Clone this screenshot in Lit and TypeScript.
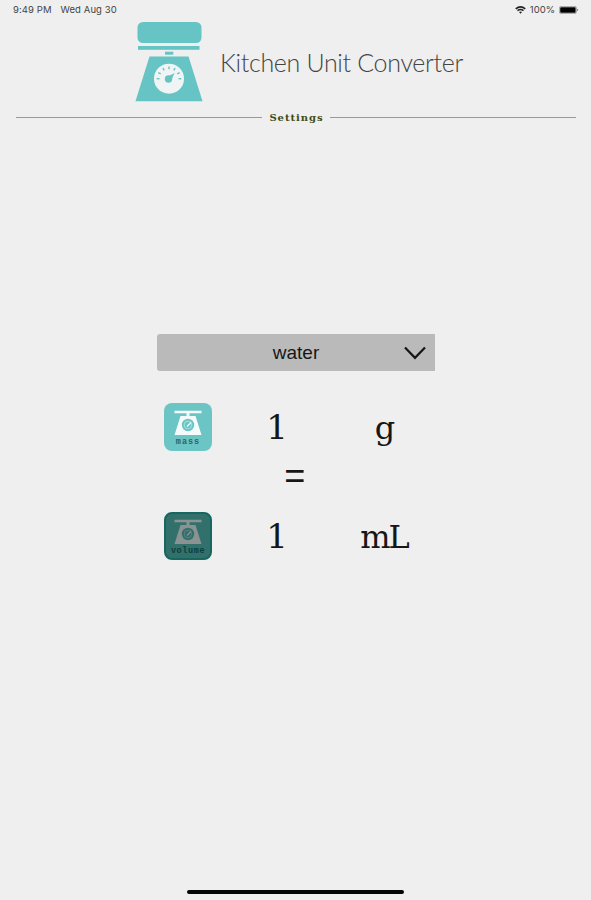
import { LitElement, html, css, svg } from "lit";
import { customElement, property } from "lit/decorators.js";

const TICKS = [-90, -60, -30, 0, 30, 60, 90];

@customElement("unit-tile")
class UnitTile extends LitElement {
  @property() label = "";
  @property({ type: Boolean, reflect: true }) dimmed = false;
  static styles = css`
    :host { display: block; width: 48px; height: 48px; box-sizing: border-box; border-radius: 8px; background: #6bc5c5; color: #2b6665; --plate: #f5fbfb; --dial: #6bc5c5; }
    :host([dimmed]) { background: #32706c; border: 2px solid #176660; color: #0b3f3c; --plate: #8b9292; --dial: #32706c; }
    svg { display: block; width: 36px; height: 28px; margin: 6px auto 0; }
    :host([dimmed]) svg { margin-top: 4px; }
    .label { font: bold 8.5px/9px "Liberation Mono", monospace; text-align: center; margin-top: 1px; letter-spacing: 1px; }
    :host([dimmed]) .label { letter-spacing: 0.6px; }
  `;
  render() {
    return html`
      <svg viewBox="0 0 36 28">
        <path d="M4.5 1.8H31.5V4.2H4.5Z M16.5 4H19.5V8H16.5Z M10.5 7H25.5L31.5 26H4.5Z" fill="var(--plate)" />
        <circle cx="18" cy="16" r="6.2" fill="var(--dial)" />
        <circle cx="18" cy="16" r="3.8" fill="none" stroke="var(--plate)" stroke-width="1" opacity=".45" />
        <path d="M17 17.5L21 13.5" stroke="var(--plate)" stroke-width="1.2" />
      </svg>
      <div class="label">${this.label}</div>
    `;
  }
}

@customElement("app-root")
class AppRoot extends LitElement {
  static styles = css`
    :host { display: flex; flex-direction: column; box-sizing: border-box; width: 100%; height: 900px; background: #efefef; color: #161616; overflow: hidden; }
    .status { display: flex; justify-content: space-between; height: 20px; padding: 0 12px 0 13px; font: 9.5px/20px Inter, sans-serif; color: #444; }
    .left { display: flex; gap: 9px; letter-spacing: 0.08px; }
    .right { display: flex; align-items: center; gap: 4px; }
    .right svg { display: block; }
    .brand { display: flex; height: 84px; padding-left: 135px; align-items: flex-start; }
    .logo { display: block; width: 68px; height: 84px; flex: none; }
    .title { margin-left: 17px; font: 300 25px/84px Lato, sans-serif; letter-spacing: -0.33px; color: #444; white-space: nowrap; }
    .divider { display: flex; align-items: center; gap: 7px; height: 14px; margin: 6px 15px 0 16px; }
    .line { height: 1px; flex: 1; background: #999; }
    .settings { font: bold 10px/16px "DejaVu Serif", serif; letter-spacing: 0.95px; margin: 1px -0.95px 0 0; color: #3d4d14; }
    .select { display: grid; grid-template-columns: 1fr auto 1fr; align-items: center; width: 278px; height: 37px; margin: 210px 0 0 157px; background: #bababa; border-radius: 3px 0 0 3px; }
    .value { grid-column: 2; font: 19px/37px "Liberation Sans", sans-serif; }
    .chevron { display: block; justify-self: end; margin-right: 8px; }
    .row { display: grid; grid-template: 48px / 48px 130px 86px; margin-left: 164px; align-items: center; }
    .mass { margin-top: 32px; }
    .volume { margin-top: 12px; }
    .amount, .unit { font: 32px/46px "DejaVu Serif", serif; text-align: center; }
    .amount { font-size: 34px; }
    .unit { letter-spacing: -2px; margin: 1px 2px 0 0; }
    .equals { height: 49px; margin: 0 0 0 284px; font: 36px/56px "Liberation Mono", monospace; }
    .home { width: 217px; height: 4px; border-radius: 2px; background: #050505; margin: auto 0 6px 187px; }
  `;
  render() {
    return html`
      <div class="status">
        <div class="left"><span>9:49 PM</span><span>Wed Aug 30</span></div>
        <div class="right">
          <svg width="11" height="8" viewBox="0 0 11 8" fill="none" stroke="#222"><path d="M.7 2.9Q5.5-1.1 10.3 2.9M2.5 4.7Q5.5 2.3 8.5 4.7" stroke-width="1.5" /><path d="M4 6L5.5 7.7L7 6Q5.5 5 4 6Z" fill="#222" stroke="none" /></svg>
          <span>100%</span>
          <svg width="20" height="8" viewBox="0 0 20 8"><rect x=".4" y=".4" width="17" height="7.2" rx="1.5" fill="none" stroke="#888" stroke-width=".7" /><rect x="1.2" y="1.2" width="15.4" height="5.6" rx=".7" fill="#000" /><path d="M18.6 3V5" stroke="#888" /></svg>
        </div>
      </div>
      <div class="brand">
        <svg class="logo" viewBox="0 0 68 84">
          <g fill="#67c4c4">
            <rect x="2.5" y="2" width="64" height="21" rx="5.5" />
            <rect x="3" y="26" width="61.5" height="3.8" />
            <rect x="30" y="31.7" width="8.3" height="3" />
            <path d="M14.5 36.5H53.5L67.5 81.2H.5Z" />
          </g>
          <circle cx="34" cy="58.7" r="15" fill="#f0f4f4" />
          ${TICKS.map((a) => svg`<path d="M34 46.4V49.2" stroke="#67c4c4" stroke-width="1.4" transform="rotate(${a} 34 58.7)" />`)}
          <circle cx="33.5" cy="59" r="3.7" fill="#67c4c4" />
          <path d="M32 57L39.5 53L36 61Z" fill="#67c4c4" />
        </svg>
        <div class="title">Kitchen Unit Converter</div>
      </div>
      <div class="divider"><span class="line"></span><span class="settings">Settings</span><span class="line"></span></div>
      <div class="select">
        <span class="value">water</span>
        <svg class="chevron" width="24" height="16" viewBox="0 0 24 16"><path d="M2 2.5L12 12.8L22 2.5" fill="none" stroke="#161616" stroke-width="2.2" /></svg>
      </div>
      <div class="row mass"><unit-tile label="mass"></unit-tile><span class="amount">1</span><span class="unit">g</span></div>
      <div class="equals">=</div>
      <div class="row volume"><unit-tile label="volume" dimmed></unit-tile><span class="amount">1</span><span class="unit">mL</span></div>
      <div class="home"></div>
    `;
  }
}
